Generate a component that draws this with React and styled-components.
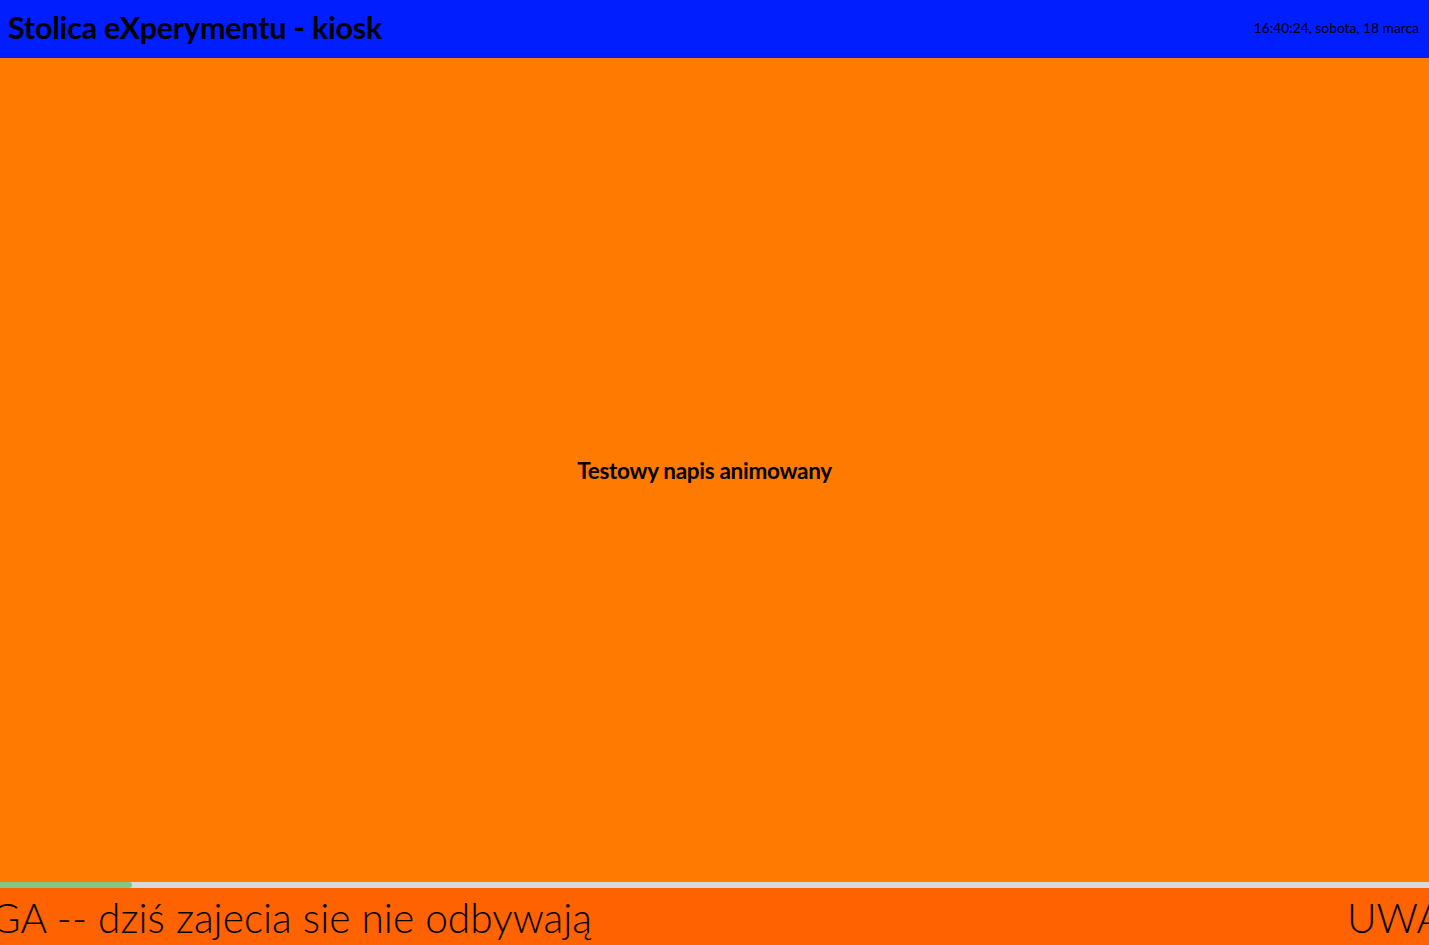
import styled, { createGlobalStyle } from "styled-components";

const GlobalStyle = createGlobalStyle`
  html, body {
    margin: 0;
    padding: 0;
    height: 100%;
    overflow: hidden;
  }
  #root {
    height: 100%;
  }
`;

const Screen = styled.div`
  height: 945px;
  display: flex;
  flex-direction: column;
  font-family: "Lato", "Noto Sans", sans-serif;
  color: #000;
`;

const Header = styled.header`
  height: 58px;
  flex: 0 0 58px;
  background: #001eff;
  display: flex;
  align-items: center;
  justify-content: space-between;
  padding: 0 10px 4px 8px;
  box-sizing: border-box;
`;

const Title = styled.h1`
  margin: 0;
  font-size: 30.5px;
  font-weight: 700;
  letter-spacing: -0.2px;
`;

const Clock = styled.div`
  font-size: 13.8px;
  font-weight: 400;
`;

const Main = styled.main`
  flex: 1;
  background: #ff7a00;
  display: flex;
  align-items: center;
  justify-content: center;
  padding-right: 20px;
`;

const Caption = styled.div`
  font-size: 22.5px;
  font-weight: 700;
  letter-spacing: -0.3px;
  margin-top: 1px;
`;

const Progress = styled.div`
  flex: 0 0 6px;
  background: #d9d9d9;
  display: flex;
`;

const ProgressFill = styled.div`
  background: #80c980;
  border-radius: 0 3px 3px 0;
`;

const Ticker = styled.footer`
  flex: 0 0 57px;
  background: #ff6200;
  display: flex;
  align-items: center;
  overflow: hidden;
  white-space: nowrap;
`;

const TickerItem = styled.div`
  flex: 0 0 ${(p) => p.$width}px;
  min-width: 0;
  display: flex;
  justify-content: ${(p) => (p.$alignEnd ? "flex-end" : "flex-start")};
  margin-left: ${(p) => p.$offset || 0}px;
  font-size: 40.7px;
  font-weight: 300;
  margin-top: 2px;
`;

const message = "UWAGA -- dziś zajecia sie nie odbywają";

export default function App() {
  return (
    <>
      <GlobalStyle />
      <Screen>
        <Header>
          <Title>Stolica eXperymentu - kiosk</Title>
          <Clock>16:40:24, sobota, 18 marca</Clock>
        </Header>
        <Main>
          <Caption>Testowy napis animowany</Caption>
        </Main>
        <Progress>
          <ProgressFill style={{ width: "132px" }} />
        </Progress>
        <Ticker>
          <TickerItem $width={592} $alignEnd>
            <span>{message}</span>
          </TickerItem>
          <TickerItem $width={1200} $offset={755}>
            <span>{message}</span>
          </TickerItem>
        </Ticker>
      </Screen>
    </>
  );
}
